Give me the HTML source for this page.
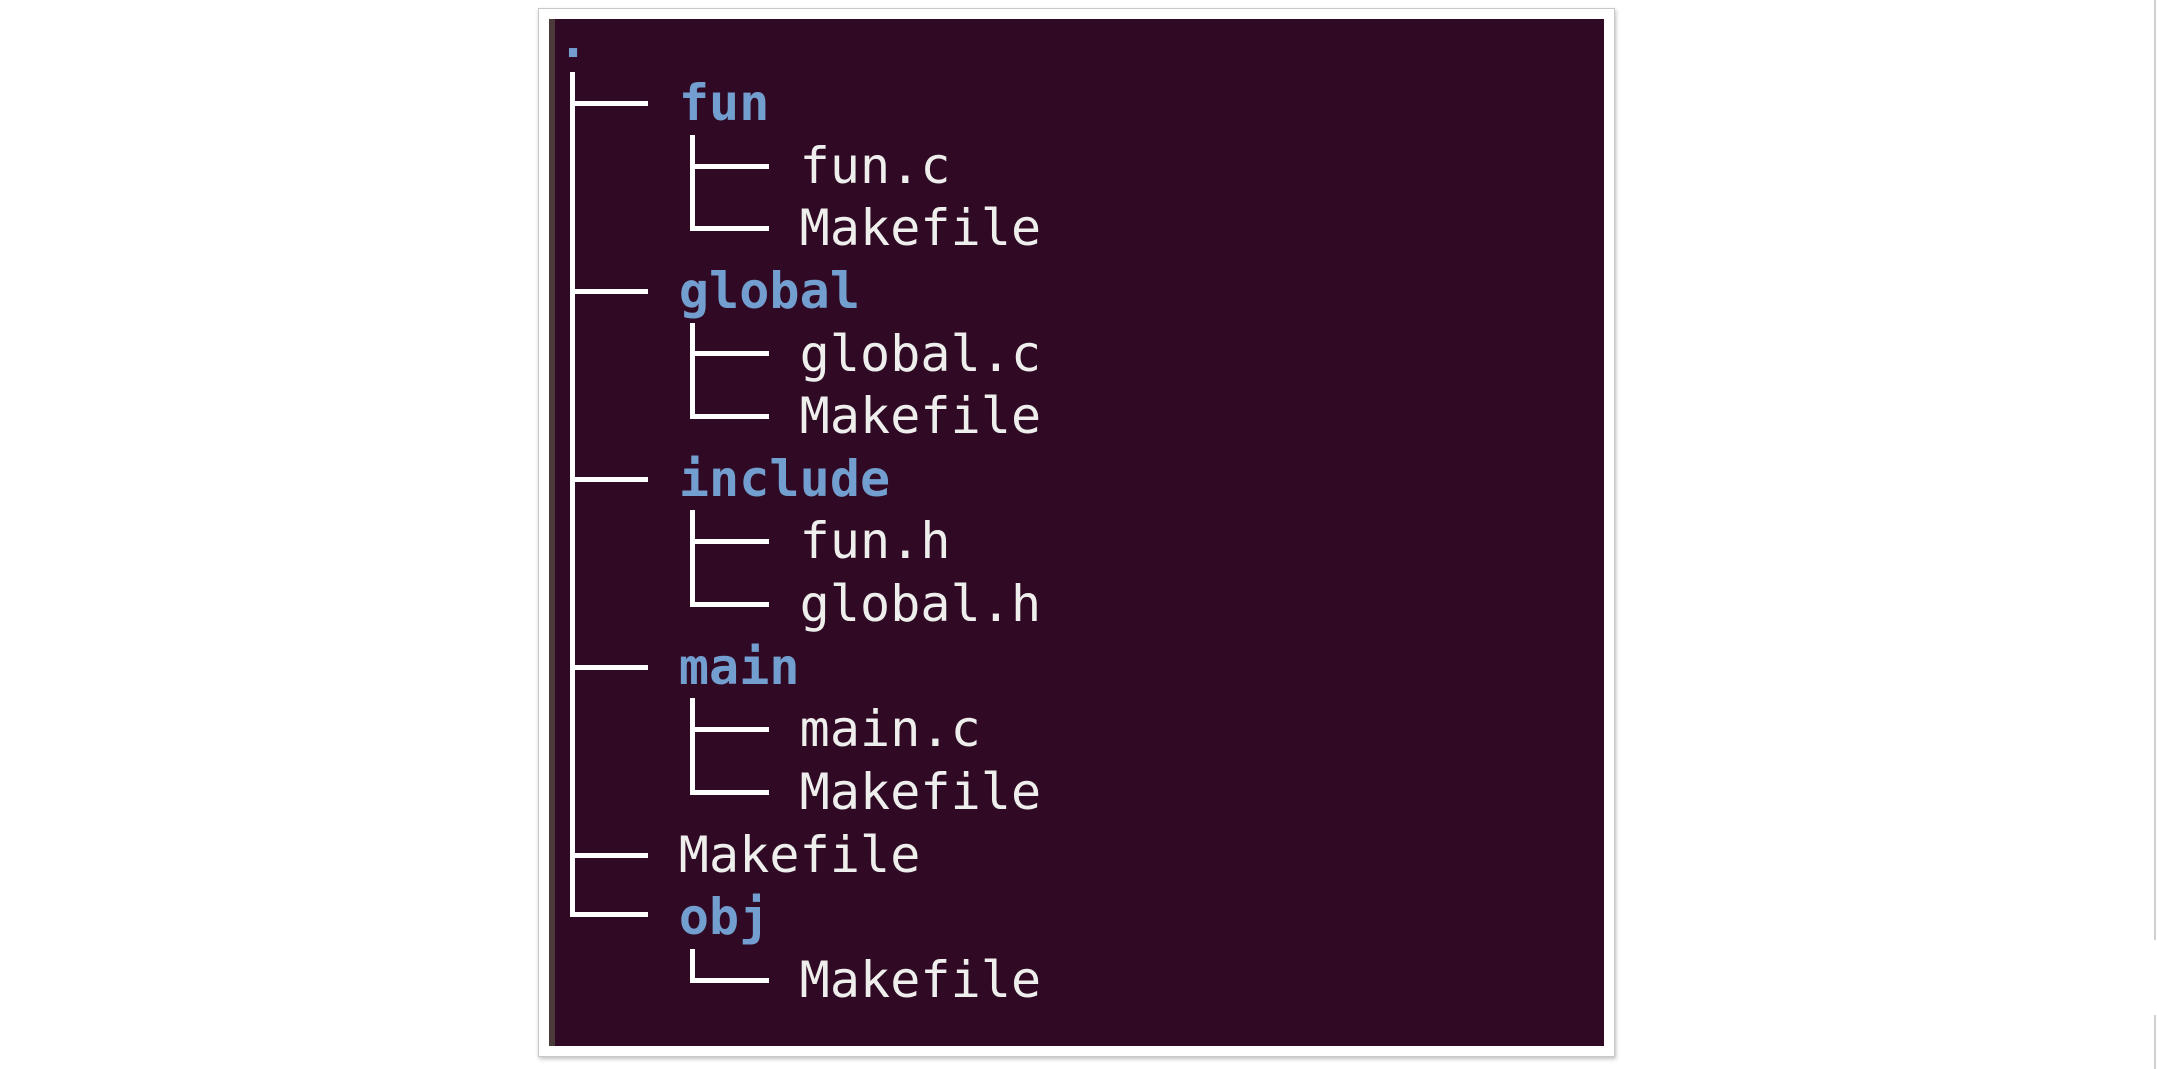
<!DOCTYPE html>
<html><head><meta charset="utf-8"><style>
html,body{margin:0;padding:0;background:#fff;width:2157px;height:1069px;overflow:hidden;position:relative}
#frame{position:absolute;left:538px;top:8px;width:1075px;height:1047px;border:1px solid #c8c8c8;background:#fff;box-shadow:1px 2px 4px rgba(0,0,0,0.25)}
#term{position:absolute;left:549px;top:19px;width:1055px;height:1027px;background:#300a24}
#strip{position:absolute;left:549px;top:19px;width:6px;height:1027px;background:#4b3a3a}
.r{position:absolute;left:558px;font-family:"DejaVu Sans Mono","Liberation Mono",monospace;font-size:50px;line-height:62px;height:62px;white-space:pre;color:#eeeeec;letter-spacing:0.1px}
.d{color:#729fcf;font-weight:bold}
.l{position:absolute;background:#fff}
</style></head><body>
<div id="frame"></div>
<div id="term"></div>
<div id="strip"></div>
<div style="position:absolute;left:2154px;top:0;width:2px;height:940px;background:#d0d0d0"></div>
<div style="position:absolute;left:2154px;top:1015px;width:2px;height:54px;background:#d0d0d0"></div>

<div class="r d" style="top:9px">.</div>
<div class="r" style="top:72px">    <span class="d">fun</span></div>
<div class="r" style="top:135px">        fun.c</div>
<div class="r" style="top:197px">        Makefile</div>
<div class="r" style="top:260px">    <span class="d">global</span></div>
<div class="r" style="top:323px">        global.c</div>
<div class="r" style="top:385px">        Makefile</div>
<div class="r" style="top:448px">    <span class="d">include</span></div>
<div class="r" style="top:510px">        fun.h</div>
<div class="r" style="top:573px">        global.h</div>
<div class="r" style="top:636px">    <span class="d">main</span></div>
<div class="r" style="top:698px">        main.c</div>
<div class="r" style="top:761px">        Makefile</div>
<div class="r" style="top:824px">    Makefile</div>
<div class="r" style="top:886px">    <span class="d">obj</span></div>
<div class="r" style="top:949px">        Makefile</div>

<div class="l" style="left:570px;top:72px;width:5px;height:845px"></div>
<div class="l" style="left:570px;top:101px;width:78px;height:5px"></div>
<div class="l" style="left:570px;top:289px;width:78px;height:5px"></div>
<div class="l" style="left:570px;top:477px;width:78px;height:5px"></div>
<div class="l" style="left:570px;top:665px;width:78px;height:5px"></div>
<div class="l" style="left:570px;top:853px;width:78px;height:5px"></div>
<div class="l" style="left:570px;top:912px;width:78px;height:5px"></div>

<div class="l" style="left:690px;top:135px;width:5px;height:94px"></div>
<div class="l" style="left:690px;top:164px;width:79px;height:5px"></div>
<div class="l" style="left:690px;top:226px;width:79px;height:5px"></div>

<div class="l" style="left:690px;top:323px;width:5px;height:96px"></div>
<div class="l" style="left:690px;top:351px;width:79px;height:5px"></div>
<div class="l" style="left:690px;top:414px;width:79px;height:5px"></div>

<div class="l" style="left:690px;top:510px;width:5px;height:97px"></div>
<div class="l" style="left:690px;top:539px;width:79px;height:5px"></div>
<div class="l" style="left:690px;top:602px;width:79px;height:5px"></div>

<div class="l" style="left:690px;top:698px;width:5px;height:97px"></div>
<div class="l" style="left:690px;top:727px;width:79px;height:5px"></div>
<div class="l" style="left:690px;top:790px;width:79px;height:5px"></div>

<div class="l" style="left:690px;top:949px;width:5px;height:32px"></div>
<div class="l" style="left:690px;top:978px;width:79px;height:5px"></div>
</body></html>
